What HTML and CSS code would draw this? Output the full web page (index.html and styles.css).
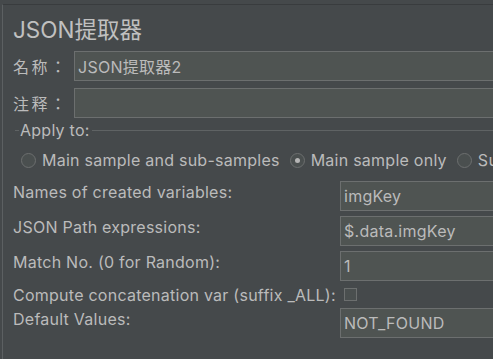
FILE: index.html
```html
<!DOCTYPE html>
<html>
  <head>
    <meta charset="UTF-8">
    <title>JSON提取器</title>
    <link rel="stylesheet" href="styles.css">
  </head>
  <body>
    <div class="frame">
      <h1 class="title">JSON提取器</h1>

      <div class="field-row">
        <span class="field-label">名称：</span>
        <input class="text-box" type="text" value="JSON提取器2">
      </div>
      <div class="field-row">
        <span class="field-label">注释：</span>
        <input class="text-box" type="text" value="">
      </div>

      <div class="group-title">
        <span class="dash"></span>
        <span class="group-name">Apply to:</span>
        <span class="rule"></span>
      </div>
      <div class="radios">
        <label class="radio"><span class="dot"></span>Main sample and sub-samples</label>
        <label class="radio"><span class="dot on"></span>Main sample only</label>
        <label class="radio"><span class="dot"></span>Sub-samples only</label>
      </div>

      <div class="vars">
        <span class="var-label">Names of created variables:</span>
        <input class="text-box" type="text" value="imgKey">

        <span class="var-label">JSON Path expressions:</span>
        <input class="text-box" type="text" value="$.data.imgKey">

        <span class="var-label">Match No. (0 for Random):</span>
        <input class="text-box" type="text" value="1">

        <span class="var-label check-label">Compute concatenation var (suffix _ALL):</span>
        <span class="check-cell"><span class="checkbox"></span></span>

        <span class="var-label">Default Values:</span>
        <input class="text-box" type="text" value="NOT_FOUND">
      </div>
    </div>
  </body>
</html>
```

FILE: styles.css
```css
body {
  margin: 0;
  background: #45494b;
  color: #bbbbbb;
  font-family: Inter, "Noto Sans CJK SC", sans-serif;
  font-size: 16px;
  letter-spacing: 0.25px;
  overflow: hidden;
  height: 359px;
}

/* outer panel edges */
.frame {
  margin-top: 4px;
  margin-left: 2px;
  border-top: 1px solid #393c3e;
  border-left: 1px solid #5c6062;
  padding-left: 10px;
  height: 400px;
  width: 540px;
}

.title {
  margin: 0;
  padding-top: 12px;
  font-size: 22.5px;
  font-weight: normal;
  line-height: 26px;
  letter-spacing: 0;
  color: #c0c0c0;
}

.field-row {
  display: flex;
  align-items: center;
  margin-top: 7px;
}
.field-row:first-of-type {
  margin-top: 8px;
}

.field-label {
  width: 61px;
  flex: none;
  font-family: Inter, "Noto Sans CJK TC", sans-serif;
  letter-spacing: 2.5px;
}

.text-box {
  flex: 1;
  box-sizing: border-box;
  height: 30px;
  margin: 0;
  padding: 0 3px;
  background: #4f5452;
  border: 1px solid #6c6f6f;
  color: #bbbbbb;
  font-family: inherit;
  font-size: 16px;
  letter-spacing: 0.25px;
  outline: none;
}

/* titled border */
.group-title {
  display: flex;
  align-items: center;
  margin-top: 3px;
  height: 18px;
}
.dash {
  width: 4px;
  margin-left: 2px;
  border-top: 1px solid #5f6364;
}
.group-name {
  padding: 0 2px 0 1px;
}
.rule {
  flex: 1;
  border-top: 1px solid #5f6364;
}

.radios {
  display: flex;
  align-items: center;
  gap: 10px;
  margin-top: 12px;
  margin-left: 8px;
  height: 18px;
  white-space: nowrap;
}
.radio {
  display: flex;
  align-items: center;
  gap: 6px;
}
.dot {
  width: 13px;
  height: 13px;
  border: 1px solid #6c6f6f;
  border-radius: 50%;
  background: #4a4f4f;
  display: flex;
  align-items: center;
  justify-content: center;
}
.dot.on::after {
  content: "";
  width: 5px;
  height: 5px;
  border-radius: 50%;
  background: #b5b5b5;
}

.vars {
  display: grid;
  grid-template-columns: 327px 1fr;
  row-gap: 5px;
  margin-top: 12px;
}
.var-label {
  padding-top: 2px;
  line-height: 18px;
  white-space: nowrap;
}
.check-label,
.check-cell {
  padding-top: 0;
  height: 17px;
  align-self: center;
}
.check-cell {
  display: flex;
  align-items: center;
}
.checkbox {
  width: 11px;
  height: 11px;
  margin-left: 4px;
  border: 1px solid #6c6f6f;
  background: #4a4f4f;
}
```
